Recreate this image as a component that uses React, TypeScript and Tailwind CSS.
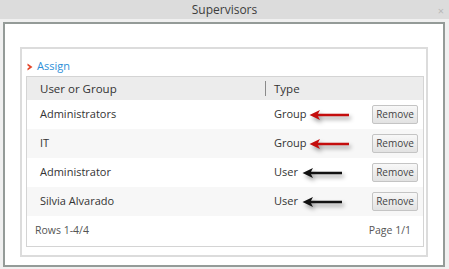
import React from "react";

type Row = { name: string; type: string; arrow: "red" | "black" };

const rows: Row[] = [
  { name: "Administrators", type: "Group", arrow: "red" },
  { name: "IT", type: "Group", arrow: "red" },
  { name: "Administrator", type: "User", arrow: "black" },
  { name: "Silvia Alvarado", type: "User", arrow: "black" },
];

function Arrow({ color }: { color: string }) {
  return (
    <svg width="42" height="12" viewBox="0 0 42 12" className="drop-shadow-[2px_3px_2px_rgba(0,0,0,0.4)]">
      <path d="M0.5 6 L11 1 L9 4.8 L40 4.8 L40 7.2 L9 7.2 L11 11 Z" fill={color} />
    </svg>
  );
}

export default function App() {
  return (
    <div className="w-[449px] h-[269px] bg-[#f0f0f0] flex flex-col font-['Open_Sans',sans-serif] text-[#333]">
      {/* title bar */}
      <div className="h-[21px] bg-[#dcdcdc] flex items-center justify-center relative pt-[1px]">
        <span className="text-[12px] text-[#3c3c3c]">Supervisors</span>
        <span className="absolute right-[5px] top-[3px] text-[11px] text-[#b8b8b8]">×</span>
      </div>

      <div className="pt-[3px] pl-[3px] pr-[4px] pb-[3px] flex-1 flex">
        <div className="flex-1 bg-white border-2 border-[#949b98] pt-[23px] pl-[15px] pr-[15px] pb-[8px] flex">
          <div className="flex-1 border-2 border-[#dcdcdc] pl-[4px] pr-[2px] pb-[8px] flex flex-col">
            <div className="h-[27px] flex items-center pl-[1px] pt-[8px]">
              <svg width="6" height="8" viewBox="0 0 6 8" className="mr-[4px]">
                <path d="M0.5 0.5 L5.5 4 L0.5 7.5 L0.5 5.5 L2.5 4 L0.5 2.5 Z" fill="#e4462a" />
              </svg>
              <span className="text-[11px] text-[#2d8fd8]">Assign</span>
            </div>
            <div className="border border-[#d4d4d4] flex flex-col">
              <div className="h-[23px] bg-[#ececec] flex items-center text-[11.5px] text-[#333]">
                <div className="w-[238px] pl-[13px]">User or Group</div>
                <div className="h-[15px] w-px bg-[#8a8a8a]" />
                <div className="pl-[8px]">Type</div>
              </div>
              {rows.map((r, i) => (
                <div
                  key={r.name}
                  className={`h-[29px] flex items-center text-[11px] ${i % 2 === 1 ? "bg-[#f7f7f7]" : "bg-white"}`}
                >
                  <div className="w-[239px] pl-[13px] text-[#333]">{r.name}</div>
                  <div className="flex-1 pl-[8px] flex items-center">
                    <span className="text-[#333]">{r.type}</span>
                    <span className={r.arrow === "red" ? "ml-[2px] mt-[1px]" : "ml-[4px] mt-[1px]"}>
                      <Arrow color={r.arrow === "red" ? "#c40d0d" : "#111"} />
                    </span>
                  </div>
                  <button className="mr-[5px] w-[46px] h-[19px] border border-[#c4c4c4] rounded-[2px] bg-gradient-to-b from-[#f8f8f8] to-[#e2e2e2] text-[10px] text-[#444] flex items-center justify-center">
                    Remove
                  </button>
                </div>
              ))}
              <div className="h-[30px] flex items-center justify-between pl-[8px] pr-[12px] text-[10.5px] text-[#555]">
                <span>Rows 1-4/4</span>
                <span>Page 1/1</span>
              </div>
            </div>
          </div>
        </div>
      </div>
    </div>
  );
}
